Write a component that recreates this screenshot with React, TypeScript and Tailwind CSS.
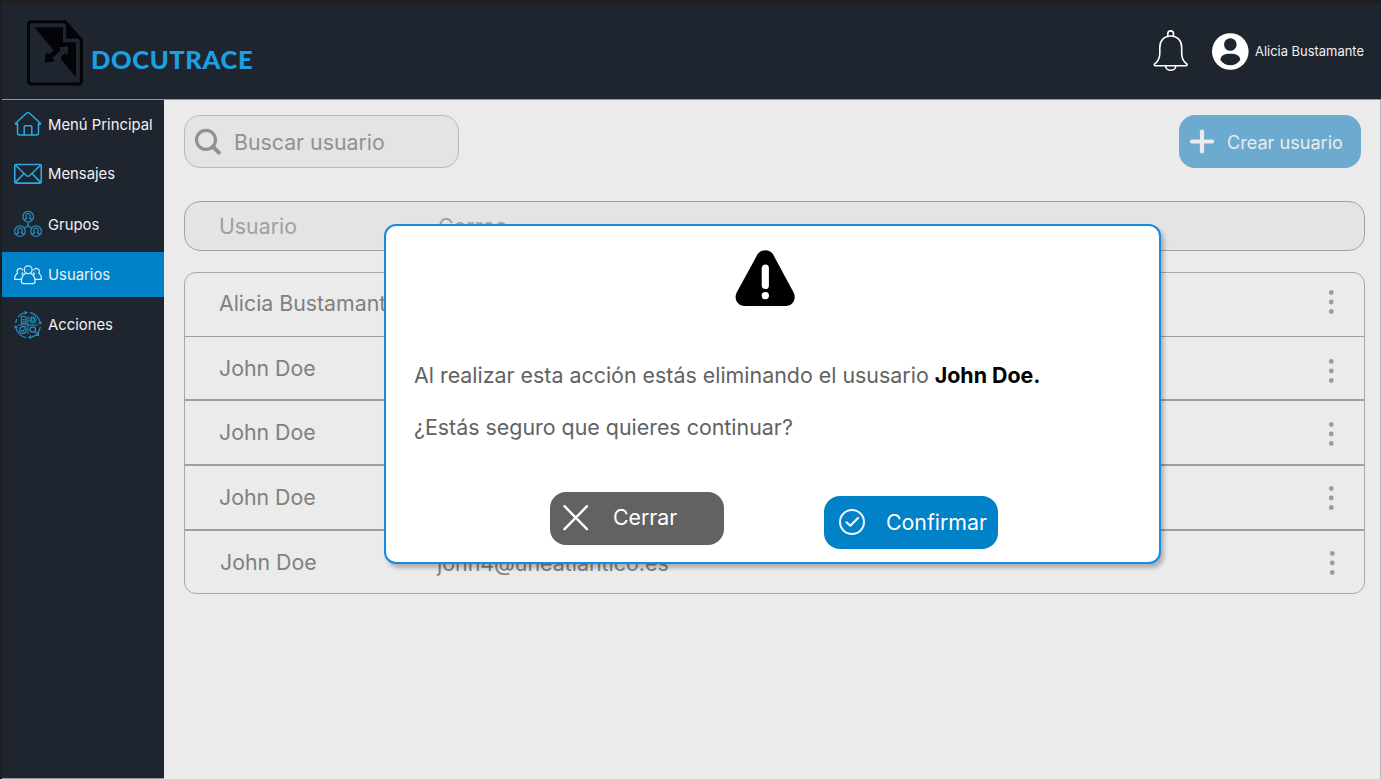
import type { ReactNode } from "react";

function DocutraceMark() {
  return (
    <svg className="h-[66px] w-[57px] shrink-0" viewBox="0 0 57 66" fill="#030407">
      <path
        d="M4 1.700H38L54.400 20V61a3 3 0 0 1-3 3H4.500a3 3 0 0 1-3-3V4.500A3 3 0 0 1 4 1.700Z"
        fill="none"
        stroke="#030407"
        strokeWidth="3"
        strokeLinejoin="round"
      />
      <path d="M39 2L55 18.500H39Z" />
      <path d="M7.500 7.300H36V22.300H49V57.300Z" />
      <path d="M41.300 26L31.500 27.500L34 29.700L26.500 36.500L31.500 41.500L34.500 38.500L33.800 37L38 33.300L40.300 35.700Z" fill="#1f252f" />
      <path d="M17.500 42.700L19.200 32.300L22 34.300L27 30L30.800 33.300L25.300 37.800L28 41.200Z" />
    </svg>
  );
}

function BellIcon() {
  return (
    <svg className="h-[42px] w-9" viewBox="0 0 36 42" fill="none" stroke="#fff" strokeWidth="1.600" strokeLinejoin="round" strokeLinecap="round">
      <path d="M14.800 6.500V3.700a2.700 2.700 0 0 1 5.700 0V6.500" />
      <path d="M17.700 6C10.800 6 6.800 11 6.800 17.500V23c0 4-1 6.800-3.300 9.300L1.700 33.800c-.8 1-.3 2 .8 2h30.400c1.100 0 1.600-1 .8-2l-1.800-1.500C29.600 29.800 28.700 27 28.700 23V17.500C28.700 11 24.600 6 17.700 6Z" />
      <path d="M12.700 36c0 2.600 2.200 4.300 5 4.300s5-1.700 5-4.300" />
    </svg>
  );
}

function AvatarIcon() {
  return (
    <svg className="h-[37px] w-[37px]" viewBox="0 0 37 37">
      <circle cx="18.300" cy="18.500" r="18.300" fill="#fff" />
      <circle cx="18.300" cy="11.500" r="6.300" fill="#1f252f" />
      <path d="M8.400 27c0-4.500 4-6.300 9.900-6.300s9.900 1.800 9.900 6.300c-2.300 3.500-5.900 5.200-9.900 5.200S10.700 30.500 8.400 27Z" fill="#1f252f" />
    </svg>
  );
}

function HomeIcon() {
  return (
    <svg className="h-7 w-7 shrink-0" viewBox="0 0 28 28" fill="none" stroke="#29abe2" strokeWidth="1.500" strokeLinejoin="round" strokeLinecap="round">
      <path d="M3.500 13.500V22.800a2.200 2.200 0 0 0 2.200 2.200H22.300a2.200 2.200 0 0 0 2.200-2.200V13.500" />
      <path d="M3.500 14.200H2.200c-.8 0-1-.7-.4-1.200L12.800 3c.8-.7 1.600-.7 2.400 0L26.200 13c.6.500.4 1.200-.4 1.200H24.500" />
      <path d="M10.200 25V16.800c0-.6.400-1 1-1h5.600c.6 0 1 .4 1 1V25" />
    </svg>
  );
}

function MailIcon() {
  return (
    <svg className="h-7 w-7 shrink-0" viewBox="0 0 28 28" fill="none" stroke="#29abe2" strokeWidth="1.600" strokeLinejoin="round">
      <rect x=".8" y="4.500" width="26.400" height="18.600" rx="1" />
      <path d="M1.200 5L12.300 15.500c1.200 1.100 2.200 1.100 3.400 0L26.800 5M1.200 22.600L10 13.500M26.800 22.600L18 13.500" />
    </svg>
  );
}

function GroupsIcon() {
  return (
    <svg className="h-7 w-7 shrink-0" viewBox="0 0 28 28" fill="none" stroke="#2392c3" strokeWidth="1.200" strokeLinejoin="round">
      {["translate(14.2 6.700)", "translate(5.900 21.200)", "translate(22.100 21.200)"].map((t) => (
        <g key={t} transform={t}>
          <circle r="5.300" />
          <path d="M-3.700 3.500C-3.300 2.300-2.600 2-1.300 1.700C-1.900 1-2.200.3-2.200-.8C-2.200-4 2.200-4 2.200-.8C2.200.3 1.900 1 1.300 1.700C2.600 2 3.300 2.300 3.700 3.500" />
        </g>
      ))}
      <path d="M14.200 12.100V15.800M14.200 15.800L10.300 18.300M14.200 15.800L18 18.300" />
    </svg>
  );
}

function UsersIcon() {
  return (
    <svg className="h-7 w-7 shrink-0" viewBox="0 0 28 28" fill="none" stroke="#d9edf8" strokeWidth="1.300" strokeLinejoin="round" strokeLinecap="round">
      <circle cx="14.200" cy="8.800" r="3.900" />
      <path d="M11.200 12.600C8.800 13.800 7.500 16.200 7.300 20.300c0 1.600.8 2.300 2.400 2.300h9c1.600 0 2.400-.7 2.400-2.300-.2-4.100-1.500-6.500-3.900-7.700" />
      <path d="M8.500 8.800A2.900 2.900 0 1 0 3.600 12.200C1.800 13.200.7 15 .6 18.300H7.300M8 13L8.800 12" />
      <path d="M19.900 8.800A2.900 2.900 0 1 1 24.800 12.200c1.800 1 2.600 2.800 2.700 6.100H21.100M20.400 13L19.600 12" />
    </svg>
  );
}

function ActionsIcon() {
  return (
    <svg className="h-7 w-7 shrink-0" viewBox="0 0 28 28" fill="none" stroke="#2392c3" strokeWidth="1.200" strokeLinejoin="round">
      <path d="M4 5.800A12.500 12.500 0 0 1 12.500 1.500M16 1.600A12.500 12.500 0 0 1 26.400 12.500M26.400 16A12.500 12.500 0 0 1 23.500 22M12.500 26.500A12.500 12.500 0 0 1 1.700 15.500M1.700 12A12.500 12.500 0 0 1 3 8M15.500 26.500A12.500 12.500 0 0 0 21 24.500" />
      <path d="M14 5V23M4 14H24" strokeWidth="1" />
      <path d="M10.500.5L12.800 1.600L11 3.400M27.300 10.500L26.300 12.800L24.500 11.200M17 27.500L15 26.400L16.800 24.500M.6 17.300L1.700 15L3.500 16.800" />
      <path d="M7.300 5.300H10.500L12 7V12.400H7.300ZM8.600 8.500H10.700M8.600 10.300H10.700" />
      <circle cx="19" cy="8.800" r="3.200" strokeDasharray="1.500 .6" />
      <circle cx="19" cy="8.800" r="1.700" />
      <circle cx="9" cy="19" r="3.300" />
      <path d="M7.400 19L8.700 20.300L10.800 17.800" />
      <circle cx="18.800" cy="18.600" r="2.700" />
      <path d="M20.800 20.600L24.500 24.300M24.500 20.300V24.300H21" />
    </svg>
  );
}

function SearchIcon() {
  return (
    <svg className="h-7 w-7" viewBox="0 0 28 28" fill="none" stroke="#919191" strokeLinecap="round">
      <circle cx="12" cy="11.800" r="9.500" strokeWidth="3.200" />
      <path d="M19 18.800L24.900 24.700" strokeWidth="4" />
    </svg>
  );
}

function PlusIcon() {
  return (
    <svg className="h-[26px] w-[26px]" viewBox="0 0 26 26" fill="none" stroke="#ebebeb" strokeWidth="4.200" strokeLinecap="round">
      <path d="M13 2.600V22.400M3 12.500H23" />
    </svg>
  );
}

function WarningIcon() {
  return (
    <svg className="h-14 w-[60px]" viewBox="0 0 60 56">
      <path d="M22.600 4.300C25.800-1.200 34.800-1.200 38 4.300L58.600 42.500C61.700 48.500 58 56 50.500 56H9.800C2.300 56-1.400 48.500 1.700 42.500Z" />
      <path d="M30.300 18.200V35.400" stroke="#fff" strokeWidth="7.200" strokeLinecap="round" />
      <circle cx="30.300" cy="45.600" r="3.700" fill="#fff" />
    </svg>
  );
}

function CloseIcon() {
  return (
    <svg className="mb-[2px] h-[26px] w-[26px]" viewBox="0 0 26 26" fill="none" stroke="#fff" strokeWidth="2.400" strokeLinecap="round">
      <path d="M1.500 1.200L24 24.200M24 1.200L1.500 24.200" />
    </svg>
  );
}

function ConfirmIcon() {
  return (
    <svg className="mb-[2px] h-[26px] w-[26px]" viewBox="0 0 26 26" fill="none" stroke="#eef7fc" strokeWidth="2.200" strokeLinecap="round" strokeLinejoin="round">
      <circle cx="13" cy="13" r="12" strokeWidth="2" />
      <path d="M7.500 13.300L11.300 16.800L19 9" />
    </svg>
  );
}

function DotsIcon() {
  return (
    <svg className="h-6 w-[6px]" viewBox="0 0 6 24" fill="#9c9c9c">
      <circle cx="3.300" cy="2.500" r="2.400" />
      <circle cx="3.300" cy="12" r="2.400" />
      <circle cx="3.300" cy="21.500" r="2.400" />
    </svg>
  );
}

function NavItem({ icon, label, className }: { icon: ReactNode; label: string; className: string }) {
  return (
    <a className={`flex shrink-0 items-center gap-[6px] pl-3 text-[14.850px] whitespace-nowrap text-[#f2f2f2] ${className}`}>
      {icon}
      <span className="pt-[2px]">{label}</span>
    </a>
  );
}

const rows = [
  { id: 1, name: "Alicia Bustamante", email: "", box: "h-[64px] border-b", pad: "pl-[34px] pr-[30px]", text: "-mt-[2px]", dots: "-mt-[5px]" },
  { id: 2, name: "John Doe", email: "", box: "h-[64px] border-b-2", pad: "pl-[34px] pr-[30px]", text: "pt-[2px]", dots: "mt-[5px]" },
  { id: 3, name: "John Doe", email: "", box: "h-[65px] border-b-2", pad: "pl-[34px] pr-[30px]", text: "pt-[1px]", dots: "mt-[2px]" },
  { id: 4, name: "John Doe", email: "", box: "h-[65px] border-b-2", pad: "pl-[34px] pr-[30px]", text: "", dots: "mt-[1px]" },
  { id: 5, name: "John Doe", email: "john4@uneatlantico.es", box: "h-[62px]", pad: "pl-[35px] pr-[29px]", text: "pt-[2px]", dots: "mt-[2px]" },
];

export default function App() {
  return (
    <div className="relative flex h-[779px] w-[1381px] flex-col overflow-hidden bg-[#1e1e1e] pt-[3px] pl-[2px] font-['Inter',sans-serif]">
      <header className="flex h-[97px] shrink-0 items-start justify-between border-b border-[#97989c] bg-[#1f252f] pr-[17px]">
        <div className="flex items-start pt-[17px] pl-[25px]">
          <DocutraceMark />
          <span className="mt-[25px] ml-[7px] origin-left scale-x-[1.040] font-['Lato',sans-serif] text-[24.500px] leading-[30px] font-black tracking-[0.6px] text-[#1ba1e3]">
            DOCUTRACE
          </span>
        </div>
        <div className="flex items-center pt-[27px]">
          <BellIcon />
          <div className="ml-[23px] flex items-center gap-[6px]">
            <AvatarIcon />
            <span className="pt-[2px] text-[12.950px] whitespace-nowrap text-[#f0f0f0]">Alicia Bustamante</span>
          </div>
        </div>
      </header>

      <div className="flex min-h-0 flex-1">
        <nav className="flex w-[162px] shrink-0 flex-col border-b border-[#97989c] bg-[#1f252f]">
          <NavItem icon={<HomeIcon />} label="Menú Principal" className="h-[48px]" />
          <NavItem icon={<MailIcon />} label="Mensajes" className="h-[51px]" />
          <NavItem icon={<GroupsIcon />} label="Grupos" className="h-[50px]" />
          <div className="h-[3px]" />
          <NavItem icon={<UsersIcon />} label="Usuarios" className="h-[45px] bg-[#0081c8]" />
          <div className="h-[3px]" />
          <NavItem icon={<ActionsIcon />} label="Acciones" className="h-[49px]" />
        </nav>

        <main className="flex flex-1 flex-col border-r border-[#b5b5b5] bg-[#ebebeb] pt-[15px] pr-[15px] pl-5 text-[21.300px]">
          <div className="flex h-[53px] items-center justify-between pr-[4px]">
            <div className="flex h-full w-[275px] items-center gap-[12px] rounded-2xl border border-[#b9b9b9] bg-[#e4e4e4] pl-[9px] text-[#919191]">
              <SearchIcon />
              <span className="pt-[2px]">Buscar usuario</span>
            </div>
            <button className="flex h-full w-[182px] items-center gap-3 rounded-2xl bg-[#6cabcf] pl-[10px] text-[18.100px] whitespace-nowrap text-[#ebebeb]">
              <PlusIcon />
              <span className="pt-[2px]">Crear usuario</span>
            </button>
          </div>

          <div className="mt-[33px] flex h-[50px] shrink-0 items-center rounded-2xl border border-[#a3a3a3] bg-[#e4e4e4] pt-[2px] pl-[34px] text-[#a0a0a0]">
            <span className="w-[219px]">Usuario</span>
            <span>Correo</span>
          </div>

          <div className="mt-[21px] flex shrink-0 flex-col rounded-xl border border-[#a8a8a8] text-[#808080]">
            {rows.map((row) => (
              <div key={row.id} className={`flex items-center justify-between border-[#9f9f9f] ${row.box} ${row.pad}`}>
                <div className={`flex whitespace-nowrap ${row.text}`}>
                  <span className="w-[217px]">{row.name}</span>
                  <span className="text-[21.400px]">{row.email}</span>
                </div>
                <span className={row.dots}>
                  <DotsIcon />
                </span>
              </div>
            ))}
          </div>
        </main>
      </div>

      <div
        role="dialog"
        className="absolute top-[224px] left-[384px] flex h-[340px] w-[777px] flex-col rounded-xl border-2 border-[#168be2] bg-white text-[21.400px] shadow-[3px_4px_4px_rgba(0,0,0,0.25)]"
      >
        <div className="flex justify-center pt-6 pr-[15px]">
          <WarningIcon />
        </div>
        <div className="mt-[53px] flex flex-col gap-[20px] pl-7 leading-8 whitespace-nowrap text-[#626262]">
          <p>
            Al realizar esta acción estás eliminando el ususario <strong className="font-bold text-black">John Doe.</strong>
          </p>
          <p>¿Estás seguro que quieres continuar?</p>
        </div>
        <div className="mt-[49px] flex items-start gap-[100px] pl-[164px] text-[21.300px] text-white">
          <button className="flex h-[53px] w-[174px] items-center gap-[24px] rounded-2xl bg-[#626262] pl-[13px]">
            <CloseIcon />
            <span className="pb-[1px]">Cerrar</span>
          </button>
          <button className="mt-1 flex h-[53px] w-[174px] items-center gap-[21px] rounded-2xl bg-[#0081c8] pl-[15px]">
            <ConfirmIcon />
            <span className="pt-[1px]">Confirmar</span>
          </button>
        </div>
      </div>
    </div>
  );
}
